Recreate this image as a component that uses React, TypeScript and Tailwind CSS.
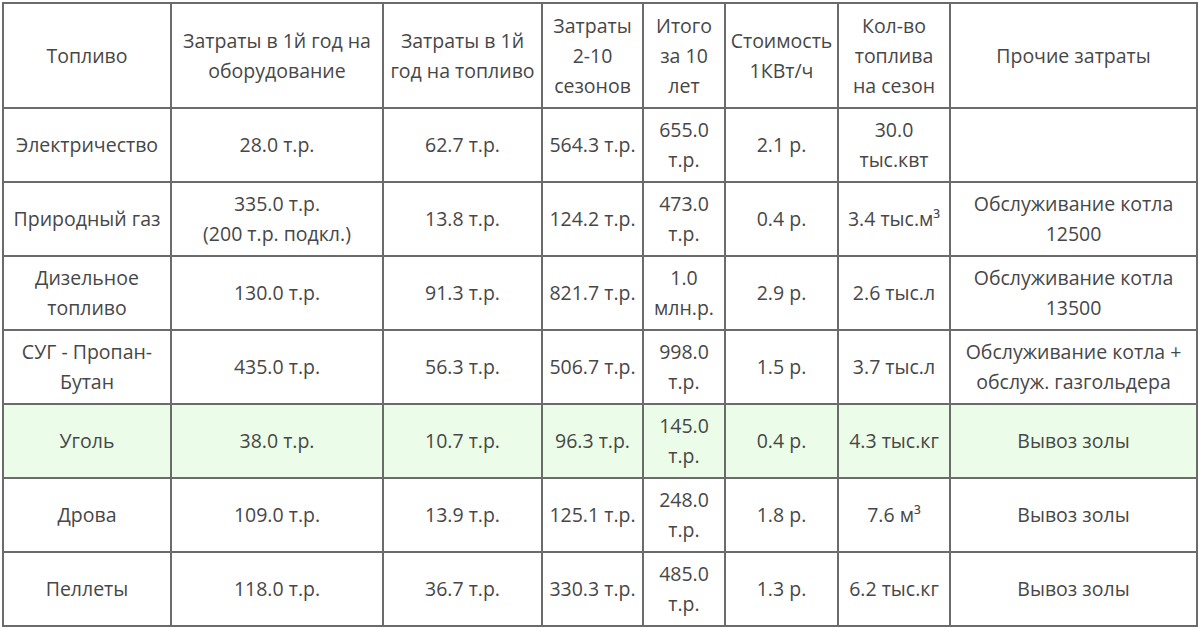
import React from "react";

const header = [
  "Топливо",
  "Затраты в 1й год на оборудование",
  "Затраты в 1й год на топливо",
  "Затраты 2-10 сезонов",
  "Итого за 10 лет",
  "Стоимость 1КВт/ч",
  "Кол-во топлива на сезон",
  "Прочие затраты",
];

const rows: { cells: React.ReactNode[]; green?: boolean }[] = [
  { cells: ["Электричество", "28.0 т.р.", "62.7 т.р.", "564.3 т.р.", "655.0 т.р.", "2.1 р.", "30.0 тыс.квт", ""] },
  {
    cells: [
      "Природный газ",
      <>335.0 т.р.<br />(200 т.р. подкл.)</>,
      "13.8 т.р.",
      "124.2 т.р.",
      "473.0 т.р.",
      "0.4 р.",
      "3.4 тыс.м³",
      "Обслуживание котла 12500",
    ],
  },
  { cells: ["Дизельное топливо", "130.0 т.р.", "91.3 т.р.", "821.7 т.р.", "1.0 млн.р.", "2.9 р.", "2.6 тыс.л", "Обслуживание котла 13500"] },
  { cells: ["СУГ - Пропан-Бутан", "435.0 т.р.", "56.3 т.р.", "506.7 т.р.", "998.0 т.р.", "1.5 р.", "3.7 тыс.л", <>Обслуживание котла +<br />обслуж. газгольдера</>] },
  { cells: ["Уголь", "38.0 т.р.", "10.7 т.р.", "96.3 т.р.", "145.0 т.р.", "0.4 р.", "4.3 тыс.кг", "Вывоз золы"], green: true },
  { cells: ["Дрова", "109.0 т.р.", "13.9 т.р.", "125.1 т.р.", "248.0 т.р.", "1.8 р.", "7.6 м³", "Вывоз золы"] },
  { cells: ["Пеллеты", "118.0 т.р.", "36.7 т.р.", "330.3 т.р.", "485.0 т.р.", "1.3 р.", "6.2 тыс.кг", "Вывоз золы"] },
];

const widths = ["w-[168px]", "w-[212px]", "w-[159px]", "w-[101px]", "w-[82px]", "w-[113px]", "w-[112px]", "w-[247px]"];

export default function App() {
  return (
    <div className="w-[1200px] h-[628px] bg-white pt-[2px] pl-[2px]" style={{ fontFamily: '"Open Sans", "Noto Sans", sans-serif' }}>
      <table className="table-fixed border-collapse w-[1196px] text-[19.5px] leading-[30px] text-[#474747]">
        <colgroup>
          {widths.map((w, i) => (
            <col key={i} className={w} />
          ))}
        </colgroup>
        <thead>
          <tr className="h-[105px]">
            {header.map((h, i) => (
              <th key={i} className="border-2 border-[#6b6b6b] font-normal text-center align-middle px-[3px]">
                {h}
              </th>
            ))}
          </tr>
        </thead>
        <tbody>
          {rows.map((r, ri) => (
            <tr key={ri} className={`h-[74px] ${r.green ? "bg-[#ebfde8]" : ""}`}>
              {r.cells.map((c, ci) => (
                <td key={ci} className="border-2 border-[#6b6b6b] text-center align-middle px-[3px]">
                  {c}
                </td>
              ))}
            </tr>
          ))}
        </tbody>
      </table>
    </div>
  );
}
